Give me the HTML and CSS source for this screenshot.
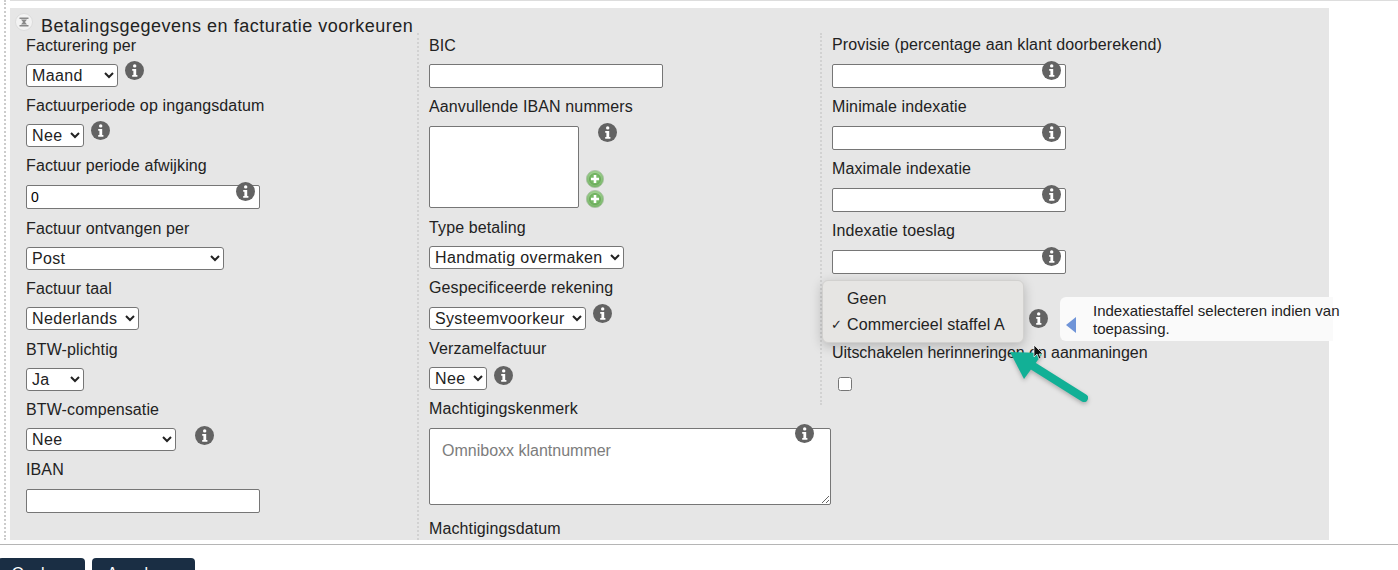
FILE: index.html
```html
<!DOCTYPE html>
<html lang="nl">
<head>
    <meta charset="UTF-8">
    <meta name="viewport" content="width=device-width, initial-scale=1.0">
    <title>Betalingsgegevens</title>
    <link rel="stylesheet" href="styles.css">
</head>
<body>
    <svg class="defs" width="0" height="0">
        <defs>
            <radialGradient id="plus-fill" cx="50%" cy="35%" r="65%">
                <stop offset="0" stop-color="#b5e0a8"/>
                <stop offset="1" stop-color="#73b262"/>
            </radialGradient>
        </defs>
        <symbol id="info" viewBox="0 0 19 19">
            <circle cx="9.5" cy="9.5" r="9.5" fill="#636363"/>
            <circle cx="9.7" cy="4.9" r="1.7" fill="#fff"/>
            <path d="M7.2 8h4v6h1.2v1.7H7.2V14h1.2v-4.3H7.2z" fill="#fff"/>
        </symbol>
        <symbol id="plus" viewBox="0 0 18 18">
            <circle cx="9" cy="9" r="8.6" fill="url(#plus-fill)" stroke="#a9bfa4" stroke-width=".8"/>
            <circle cx="9" cy="9" r="5.6" fill="#76b965" stroke="#5f9a50" stroke-width=".6"/>
            <path d="M7.7 5h2.6v2.7H13v2.6h-2.7V13H7.7v-2.7H5V7.7h2.7z" fill="#fff"/>
        </symbol>
    </svg>

    <div class="page">
        <div class="panel">
            <div class="panel-head">
                <svg class="collapse" width="18" height="18" viewBox="0 0 18 18">
                    <circle cx="9" cy="9" r="8.5" fill="#f3f3f3" stroke="#dcdcdc"/>
                    <path d="M4.5 4.6h9v1.5h-9zM4.5 11.9h9v1.5h-9zM6 6.6h6l-2 2.4 2 2.4H6l2-2.4z" fill="#8a8a8a"/>
                </svg>
                <h2>Betalingsgegevens en facturatie voorkeuren</h2>
            </div>

            <div class="columns">
                <!-- Kolom 1 -->
                <div class="col col-first">
                    <div class="field">
                        <label>Facturering per</label>
                        <div class="row">
                            <select class="w-92"><option>Maand</option></select>
                            <svg class="icon"><use href="#info"/></svg>
                        </div>
                    </div>
                    <div class="field">
                        <label>Factuurperiode op ingangsdatum</label>
                        <div class="row">
                            <select class="w-58"><option>Nee</option></select>
                            <svg class="icon"><use href="#info"/></svg>
                        </div>
                    </div>
                    <div class="field field-low field-roomy">
                        <label>Factuur periode afwijking</label>
                        <div class="input-wrap">
                            <input type="text" value="0">
                            <svg class="icon icon-over"><use href="#info"/></svg>
                        </div>
                    </div>
                    <div class="field">
                        <label>Factuur ontvangen per</label>
                        <div class="row"><select class="w-198"><option>Post</option></select></div>
                    </div>
                    <div class="field field-roomy">
                        <label>Factuur taal</label>
                        <div class="row"><select class="w-113"><option>Nederlands</option></select></div>
                    </div>
                    <div class="field">
                        <label>BTW-plichtig</label>
                        <div class="row"><select class="w-58"><option>Ja</option></select></div>
                    </div>
                    <div class="field">
                        <label>BTW-compensatie</label>
                        <div class="row">
                            <select class="w-150"><option>Nee</option></select>
                            <svg class="icon icon-far"><use href="#info"/></svg>
                        </div>
                    </div>
                    <div class="field field-low">
                        <label>IBAN</label>
                        <div class="input-wrap"><input type="text"></div>
                    </div>
                </div>

                <!-- Kolom 2 -->
                <div class="col">
                    <div class="field field-input">
                        <label class="label-low">BIC</label>
                        <div class="input-wrap"><input type="text"></div>
                    </div>
                    <div class="field field-area">
                        <label>Aanvullende IBAN nummers</label>
                        <div class="row">
                            <textarea class="area-small"></textarea>
                            <svg class="icon icon-area"><use href="#info"/></svg>
                            <div class="plus-stack">
                                <svg class="plus"><use href="#plus"/></svg>
                                <svg class="plus"><use href="#plus"/></svg>
                            </div>
                        </div>
                    </div>
                    <div class="field field-roomy">
                        <label class="label-low">Type betaling</label>
                        <div class="row"><select class="w-195"><option>Handmatig overmaken</option></select></div>
                    </div>
                    <div class="field">
                        <label>Gespecificeerde rekening</label>
                        <div class="row">
                            <select class="w-157"><option>Systeemvoorkeur</option></select>
                            <svg class="icon"><use href="#info"/></svg>
                        </div>
                    </div>
                    <div class="field field-roomy">
                        <label class="label-low">Verzamelfactuur</label>
                        <div class="row">
                            <select class="w-58"><option>Nee</option></select>
                            <svg class="icon icon-low"><use href="#info"/></svg>
                        </div>
                    </div>
                    <div class="field field-big">
                        <label>Machtigingskenmerk</label>
                        <div class="input-wrap area-wrap">
                            <textarea class="area-big" placeholder="Omniboxx klantnummer"></textarea>
                            <svg class="icon icon-over-big"><use href="#info"/></svg>
                        </div>
                    </div>
                    <div class="field field-end">
                        <label class="label-low">Machtigingsdatum</label>
                    </div>
                </div>

                <!-- Kolom 3 -->
                <div class="col col-last">
                    <div class="field field-input">
                        <label>Provisie (percentage aan klant doorberekend)</label>
                        <div class="input-wrap">
                            <input type="text">
                            <svg class="icon icon-over"><use href="#info"/></svg>
                        </div>
                    </div>
                    <div class="field field-input">
                        <label>Minimale indexatie</label>
                        <div class="input-wrap">
                            <input type="text">
                            <svg class="icon icon-over"><use href="#info"/></svg>
                        </div>
                    </div>
                    <div class="field field-input">
                        <label>Maximale indexatie</label>
                        <div class="input-wrap">
                            <input type="text">
                            <svg class="icon icon-over"><use href="#info"/></svg>
                        </div>
                    </div>
                    <div class="field field-input">
                        <label>Indexatie toeslag</label>
                        <div class="input-wrap">
                            <input type="text">
                            <svg class="icon icon-over"><use href="#info"/></svg>
                        </div>
                    </div>
                    <div class="field field-staffel">
                        <div class="row">
                            <select class="w-190"><option>Commercieel staffel A</option></select>
                            <svg class="icon"><use href="#info"/></svg>
                        </div>

                        <ul class="popup">
                            <li>Geen</li>
                            <li class="checked">Commercieel staffel A</li>
                        </ul>

                        <div class="tooltip">
                            <span class="tooltip-arrow"></span>
                            <p>Indexatiestaffel selecteren indien van toepassing.</p>
                        </div>
                    </div>
                    <div class="field">
                        <label class="label-tight">Uitschakelen herinneringen en aanmaningen</label>
                        <div class="row"><input type="checkbox" class="check"></div>
                    </div>
                </div>
            </div>
        </div>
    </div>

    <div class="actions">
        <button>Opslaan</button>
        <button>Annuleren</button>
    </div>

    <!-- Annotatie uit de schermafbeelding -->
    <svg class="annotation" width="120" height="80" viewBox="0 0 120 80">
        <path d="M76 68 L25 36" stroke="#12b096" stroke-width="8" stroke-linecap="round"/>
        <path d="M2 22 L35 23 L16 49z" fill="#12b096"/>
    </svg>
    <svg class="cursor" width="12" height="16" viewBox="0 0 12 16">
        <path d="M1 1v12l3-3 2 5 2-1-2-4h4z" fill="#111" stroke="#fff" stroke-width=".7"/>
    </svg>
</body>
</html>
```

FILE: styles.css
```css
* {
    box-sizing: border-box;
}

html, body {
    height: 570px;
    overflow: hidden;
}

body {
    margin: 0;
    background: #fff;
    color: #222;
    font-family: "Liberation Sans", Arial, sans-serif;
    font-size: 16px;
    letter-spacing: .12px;
    position: relative;
}

.defs {
    position: absolute;
}

/* Page and panel */
.page {
    height: 545px;
    padding: 0 0 5px 4px;
    border-bottom: 1px solid #b5b5b5;
}

.panel {
    height: 540px;
    padding: 8px 69px 0 4px;
    border-left: 2px dotted #ccc;
    background: linear-gradient(#ddd, #ddd) 4px 0 / 100% 1px no-repeat;
}

.panel-head {
    display: flex;
    align-items: flex-start;
    height: 25px;
    padding: 5px 0 0 5px;
    background: #e6e6e6;
}

.panel-head h2 {
    margin: 1px 0 0 8px;
    font-size: 18px;
    font-weight: normal;
    line-height: 24px;
    letter-spacing: .5px;
}

.collapse {
    flex: none;
}

.columns {
    display: grid;
    grid-template-columns: 407px 403px 1fr;
    height: 507px;
    background: #e6e6e6;
}

.col {
    padding: 2px 0 0 10px;
    border-left: 2px dotted #d2d2d2;
}

.col-first {
    padding-left: 16px;
    border-left: none;
}

.col-last {
    height: 372px;
}

/* Fields */
.field {
    position: relative;
    margin-bottom: 8px;
}

.field label {
    display: block;
    height: 20px;
    margin-bottom: 9px;
    line-height: 20px;
    white-space: nowrap;
}

.col-first .field label,
.field .label-low {
    line-height: 22px;
}

.field .label-tight {
    letter-spacing: -.05px;
}

.field-input,
.field-area,
.field-roomy {
    margin-bottom: 9px;
}

.field-low label {
    margin-bottom: 10px;
}

.field-big {
    margin-bottom: 13px;
}

.field-end,
.field-end label {
    margin-bottom: 0;
}

.field-staffel {
    height: 52px;
    padding-top: 29px;
}

.row {
    display: flex;
    align-items: flex-start;
    position: relative;
}

.input-wrap {
    position: relative;
    width: 234px;
}

.area-wrap {
    width: 402px;
}

select {
    height: 23px;
    padding: 0 0 0 1px;
    border: 1px solid #767676;
    border-radius: 3px;
    background-color: #fff;
    color: #222;
    font-family: inherit;
    font-size: 16px;
    letter-spacing: .35px;
}

input[type="text"] {
    display: block;
    width: 100%;
    height: 24px;
    padding: 2px 4px;
    border: 1px solid #767676;
    border-radius: 2px;
    background: #fff;
    font-family: inherit;
    font-size: 14px;
}

textarea {
    display: block;
    border: 1px solid #767676;
    border-radius: 2px;
    background: #fff;
    font-family: inherit;
}

.area-small {
    width: 150px;
    height: 82px;
    resize: none;
}

.area-big {
    width: 402px;
    height: 77px;
    padding: 13px 12px;
    font-size: 16px;
}

.area-big::placeholder {
    color: #7c7c7c;
}

.w-58 { width: 58px; }
.w-92 { width: 92px; }
.w-113 { width: 113px; }
.w-150 { width: 150px; }
.w-157 { width: 157px; }
.w-190 { width: 190px; }
.w-195 { width: 195px; }
.w-198 { width: 198px; }

/* Icons */
.icon {
    flex: none;
    width: 19px;
    height: 19px;
    margin: -3px 0 0 7px;
}

.icon-low {
    margin-top: -1px;
}

.icon-far {
    margin-left: 19px;
    margin-top: -2px;
}

.icon-area {
    margin-left: 19px;
    margin-top: -3px;
}

.icon-over {
    position: absolute;
    top: -3px;
    right: 5px;
    margin: 0;
}

.icon-over-big {
    position: absolute;
    top: -4px;
    right: 17px;
    margin: 0;
}

.plus-stack {
    position: absolute;
    top: 44px;
    left: 157px;
    display: flex;
    flex-direction: column;
    gap: 2px;
}

.plus {
    display: block;
    width: 18px;
    height: 18px;
}

.check {
    width: 14px;
    height: 14px;
    margin: 5px 0 0 6px;
}

/* Native menu and tooltip */
.popup {
    position: absolute;
    top: -3px;
    left: -10px;
    width: 202px;
    height: 63px;
    margin: 0;
    padding: 6px 0 0 24px;
    border: 1px solid #d2d1cf;
    border-radius: 6px;
    background: #e6e5e3;
    box-shadow: 0 3px 12px rgba(0, 0, 0, .22);
    list-style: none;
}

.popup li {
    height: 26px;
    line-height: 24px;
    white-space: nowrap;
    position: relative;
}

.checked::before {
    content: "✓";
    position: absolute;
    left: -16px;
    font-family: "DejaVu Sans", sans-serif;
    font-size: 13px;
}

.tooltip {
    position: absolute;
    top: 14px;
    left: 228px;
    width: 273px;
    height: 44px;
    padding: 5px 0 0 33px;
    border-radius: 6px 0 0 6px;
    background: #fafafa;
    font-size: 15px;
    line-height: 18px;
    letter-spacing: 0;
}

.tooltip p {
    width: 250px;
    margin: 0;
}

.tooltip-arrow {
    position: absolute;
    top: 20px;
    left: 6px;
    width: 0;
    height: 0;
    border-top: 8px solid transparent;
    border-bottom: 8px solid transparent;
    border-right: 10px solid #6f94d8;
}

/* Buttons */
.actions {
    display: flex;
    gap: 7px;
    margin: 13px 0 0 -2px;
}

.actions button {
    flex: none;
    width: 87px;
    height: 31px;
    padding: 0;
    border: none;
    border-radius: 4px;
    background: #1a2e44;
    color: #fff;
    font-family: inherit;
    font-size: 16px;
}

.actions button:last-child {
    width: 103px;
}

/* Overlays */
.annotation {
    position: absolute;
    top: 330px;
    left: 1008px;
    filter: drop-shadow(0 2px 2px rgba(0, 0, 0, .25));
}

.cursor {
    position: absolute;
    top: 344px;
    left: 1033px;
}
```
